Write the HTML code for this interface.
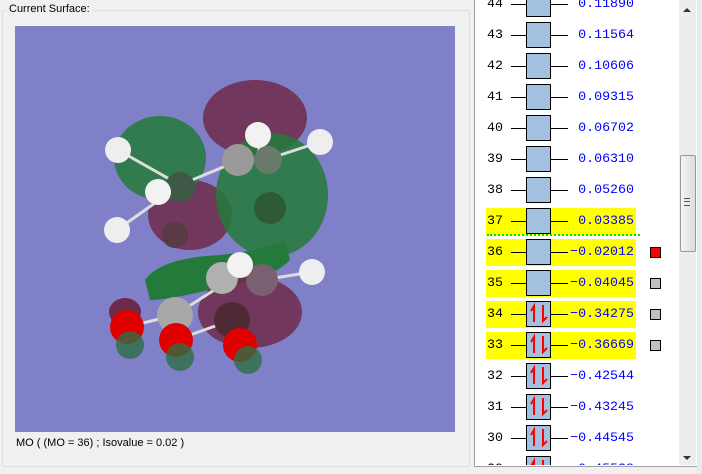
<!DOCTYPE html>
<html style="overflow:hidden;width:702px;height:474px"><head><meta charset="utf-8"><style>
body{margin:0;width:702px;height:474px;background:#f0f0f0;position:relative;overflow:hidden;font-family:"Liberation Sans",sans-serif}
.abs{position:absolute}
.num{position:absolute;left:12px;font:13.3px "Liberation Mono",monospace;color:#000;line-height:16px}
.val{position:absolute;right:46px;font:13.3px "Liberation Mono",monospace;color:#0000ff;line-height:16px;text-align:right}
.ln{position:absolute;left:36px;width:57px;height:1px;background:#000}
.bx{position:absolute;left:51px;width:23px;height:24px;border:1px solid #000;background:#a3c1df}
.yl{position:absolute;left:11px;width:150px;height:27px;background:#ffff00}
.sq{position:absolute;left:650px;width:9px;height:9px;border:1px solid #000;background:#c0c0c0}
</style></head><body>
<div class="abs" style="left:2px;top:10px;width:466px;height:455px;border:1px solid #d5dfe5;border-radius:2px"></div>
<div class="abs" style="left:6px;top:3px;padding:0 3px;background:#f0f0f0;font-size:11px;color:#000">Current Surface:</div>
<div class="abs" style="left:15px;top:26px;width:440px;height:406px;background:#8080c8;overflow:hidden">
<svg width="440" height="406" viewBox="15 26 440 406" xmlns="http://www.w3.org/2000/svg">
<ellipse cx="255" cy="118" rx="52" ry="38" fill="#6e2a4a" opacity=".85"/>
<ellipse cx="190" cy="215" rx="42" ry="35" fill="#6e2a4a" opacity=".85"/>
<ellipse cx="160" cy="158" rx="46" ry="42" fill="#237a3a" opacity=".85"/>
<ellipse cx="272" cy="195" rx="56" ry="62" fill="#237a3a" opacity=".85"/>
<path d="M145 280 Q160 258 220 255 Q265 250 285 240 L290 260 Q270 280 230 285 Q170 300 150 300 Z" fill="#237a3a"/>
<ellipse cx="250" cy="312" rx="52" ry="36" fill="#6e2a4a" opacity=".85"/>
<ellipse cx="125" cy="312" rx="16" ry="14" fill="#6e2a4a"/>
<g stroke="#ddd" stroke-width="3">
<line x1="118" y1="150" x2="180" y2="185"/><line x1="117" y1="230" x2="180" y2="185"/><line x1="180" y1="185" x2="240" y2="160"/>
<line x1="258" y1="135" x2="260" y2="165"/><line x1="320" y1="142" x2="265" y2="160"/><line x1="312" y1="272" x2="262" y2="280"/>
<line x1="175" y1="315" x2="230" y2="280"/><line x1="127" y1="327" x2="175" y2="315"/><line x1="176" y1="340" x2="232" y2="320"/>
</g>
<g>
<circle cx="180" cy="187" r="15" fill="#3e5a46"/><circle cx="238" cy="160" r="16" fill="#9a9a9a"/><circle cx="268" cy="160" r="14" fill="#6a7a6a"/>
<circle cx="175" cy="315" r="18" fill="#a8a8a8"/><circle cx="222" cy="278" r="16" fill="#b0b0b0"/><circle cx="262" cy="280" r="16" fill="#7a6070"/>
<circle cx="232" cy="320" r="18" fill="#4e2a34"/><circle cx="175" cy="235" r="13" fill="#5a3a44"/><circle cx="270" cy="208" r="16" fill="#2e5a34"/>
<circle cx="127" cy="327" r="17" fill="#e00000"/><circle cx="176" cy="340" r="17" fill="#e00000"/><circle cx="240" cy="345" r="17" fill="#e00000"/>
<circle cx="130" cy="345" r="14" fill="#2c6e44" opacity=".8"/><circle cx="180" cy="357" r="14" fill="#2c6e44" opacity=".8"/><circle cx="248" cy="360" r="14" fill="#2c6e44" opacity=".8"/>
<circle cx="118" cy="150" r="13" fill="#eee"/><circle cx="117" cy="230" r="13" fill="#eee"/><circle cx="158" cy="192" r="13" fill="#f2f2f2"/>
<circle cx="258" cy="135" r="13" fill="#f2f2f2"/><circle cx="320" cy="142" r="13" fill="#eee"/><circle cx="240" cy="265" r="13" fill="#f2f2f2"/><circle cx="312" cy="272" r="13" fill="#eee"/>
</g></svg></div>
<div class="abs" style="left:16px;top:437px;font-size:11px;color:#000">MO ( (MO = 36) ; Isovalue = 0.02 )</div>

<div class="abs" style="left:474px;top:-2px;width:222px;height:467px;border:1px solid #a0a0a0;background:#fff;overflow:hidden">
<div class="abs" style="left:0;top:1px;width:205px;height:465px;overflow:hidden">
<div class="yl" style="top:208px"></div><div class="yl" style="top:239px"></div><div class="yl" style="top:270px"></div><div class="yl" style="top:301px"></div><div class="yl" style="top:332px"></div>
<div class="abs" style="left:12px;top:234px;width:153px;border-top:2px dotted #00dd00"></div>
<div class="num" style="top:-4px">44</div><div class="ln" style="top:4px"></div><div class="bx" style="top:-9px"></div><div class="val" style="top:-4px">0.11890</div>
<div class="num" style="top:27px">43</div><div class="ln" style="top:35px"></div><div class="bx" style="top:22px"></div><div class="val" style="top:27px">0.11564</div>
<div class="num" style="top:58px">42</div><div class="ln" style="top:66px"></div><div class="bx" style="top:53px"></div><div class="val" style="top:58px">0.10606</div>
<div class="num" style="top:89px">41</div><div class="ln" style="top:97px"></div><div class="bx" style="top:84px"></div><div class="val" style="top:89px">0.09315</div>
<div class="num" style="top:120px">40</div><div class="ln" style="top:128px"></div><div class="bx" style="top:115px"></div><div class="val" style="top:120px">0.06702</div>
<div class="num" style="top:151px">39</div><div class="ln" style="top:159px"></div><div class="bx" style="top:146px"></div><div class="val" style="top:151px">0.06310</div>
<div class="num" style="top:182px">38</div><div class="ln" style="top:190px"></div><div class="bx" style="top:177px"></div><div class="val" style="top:182px">0.05260</div>
<div class="num" style="top:213px">37</div><div class="ln" style="top:221px"></div><div class="bx" style="top:208px"></div><div class="val" style="top:213px">0.03385</div>
<div class="num" style="top:244px">36</div><div class="ln" style="top:252px"></div><div class="bx" style="top:239px"></div><div class="val" style="top:244px">−0.02012</div>
<div class="num" style="top:275px">35</div><div class="ln" style="top:283px"></div><div class="bx" style="top:270px"></div><div class="val" style="top:275px">−0.04045</div>
<div class="num" style="top:306px">34</div><div class="ln" style="top:314px"></div><div class="bx" style="top:301px"></div><div class="val" style="top:306px">−0.34275</div>
<div class="num" style="top:337px">33</div><div class="ln" style="top:345px"></div><div class="bx" style="top:332px"></div><div class="val" style="top:337px">−0.36669</div>
<div class="num" style="top:368px">32</div><div class="ln" style="top:376px"></div><div class="bx" style="top:363px"></div><div class="val" style="top:368px">−0.42544</div>
<div class="num" style="top:399px">31</div><div class="ln" style="top:407px"></div><div class="bx" style="top:394px"></div><div class="val" style="top:399px">−0.43245</div>
<div class="num" style="top:430px">30</div><div class="ln" style="top:438px"></div><div class="bx" style="top:425px"></div><div class="val" style="top:430px">−0.44545</div>
<div class="num" style="top:461px">29</div><div class="ln" style="top:469px"></div><div class="bx" style="top:456px"></div><div class="val" style="top:461px">−0.45538</div>
<svg class="abs" style="left:51px;top:300px" width="26" height="170" xmlns="http://www.w3.org/2000/svg">
<g fill="none" stroke="#ff0000" stroke-width="2">
<path d="M8 22 V6 L5 11"/><path d="M17 5 V21 L21 17"/>
<path d="M8 53 V37 L5 42"/><path d="M17 36 V52 L21 48"/>
<path d="M8 84 V68 L5 73"/><path d="M17 67 V83 L21 79"/>
<path d="M8 115 V99 L5 104"/><path d="M17 98 V114 L21 110"/>
<path d="M8 146 V130 L5 135"/><path d="M17 129 V145 L21 141"/>
<path d="M8 177 V161 L5 166"/><path d="M17 160 V176 L21 172"/>
</g></svg>
</div>
</div>
<div class="abs" style="left:679px;top:0;width:17px;height:465px;background:#ededed"></div>
<div class="abs" style="left:680px;top:155px;width:14px;height:95px;border:1px solid #999;border-radius:2px;background:linear-gradient(90deg,#f4f4f4,#dcdcdc)"></div>
<div class="abs" style="left:684px;top:198px;width:6px;height:6px;border-top:1px solid #555;border-bottom:1px solid #555"></div>
<div class="abs" style="left:684px;top:201px;width:6px;height:1px;background:#555"></div>
<div class="abs" style="left:683px;top:8px;width:0;height:0;border:4px solid transparent;border-bottom-color:#333;border-top:0"></div>
<div class="abs" style="left:683px;top:456px;width:0;height:0;border:4px solid transparent;border-top-color:#333;border-bottom:0"></div>
<div class="abs" style="left:697px;top:0;width:5px;height:474px;background:#e4ebf1"></div>
<div class="sq" style="top:247px;background:#ff0000"></div>
<div class="sq" style="top:278px"></div>
<div class="sq" style="top:309px"></div>
<div class="sq" style="top:340px"></div>
</body></html>
